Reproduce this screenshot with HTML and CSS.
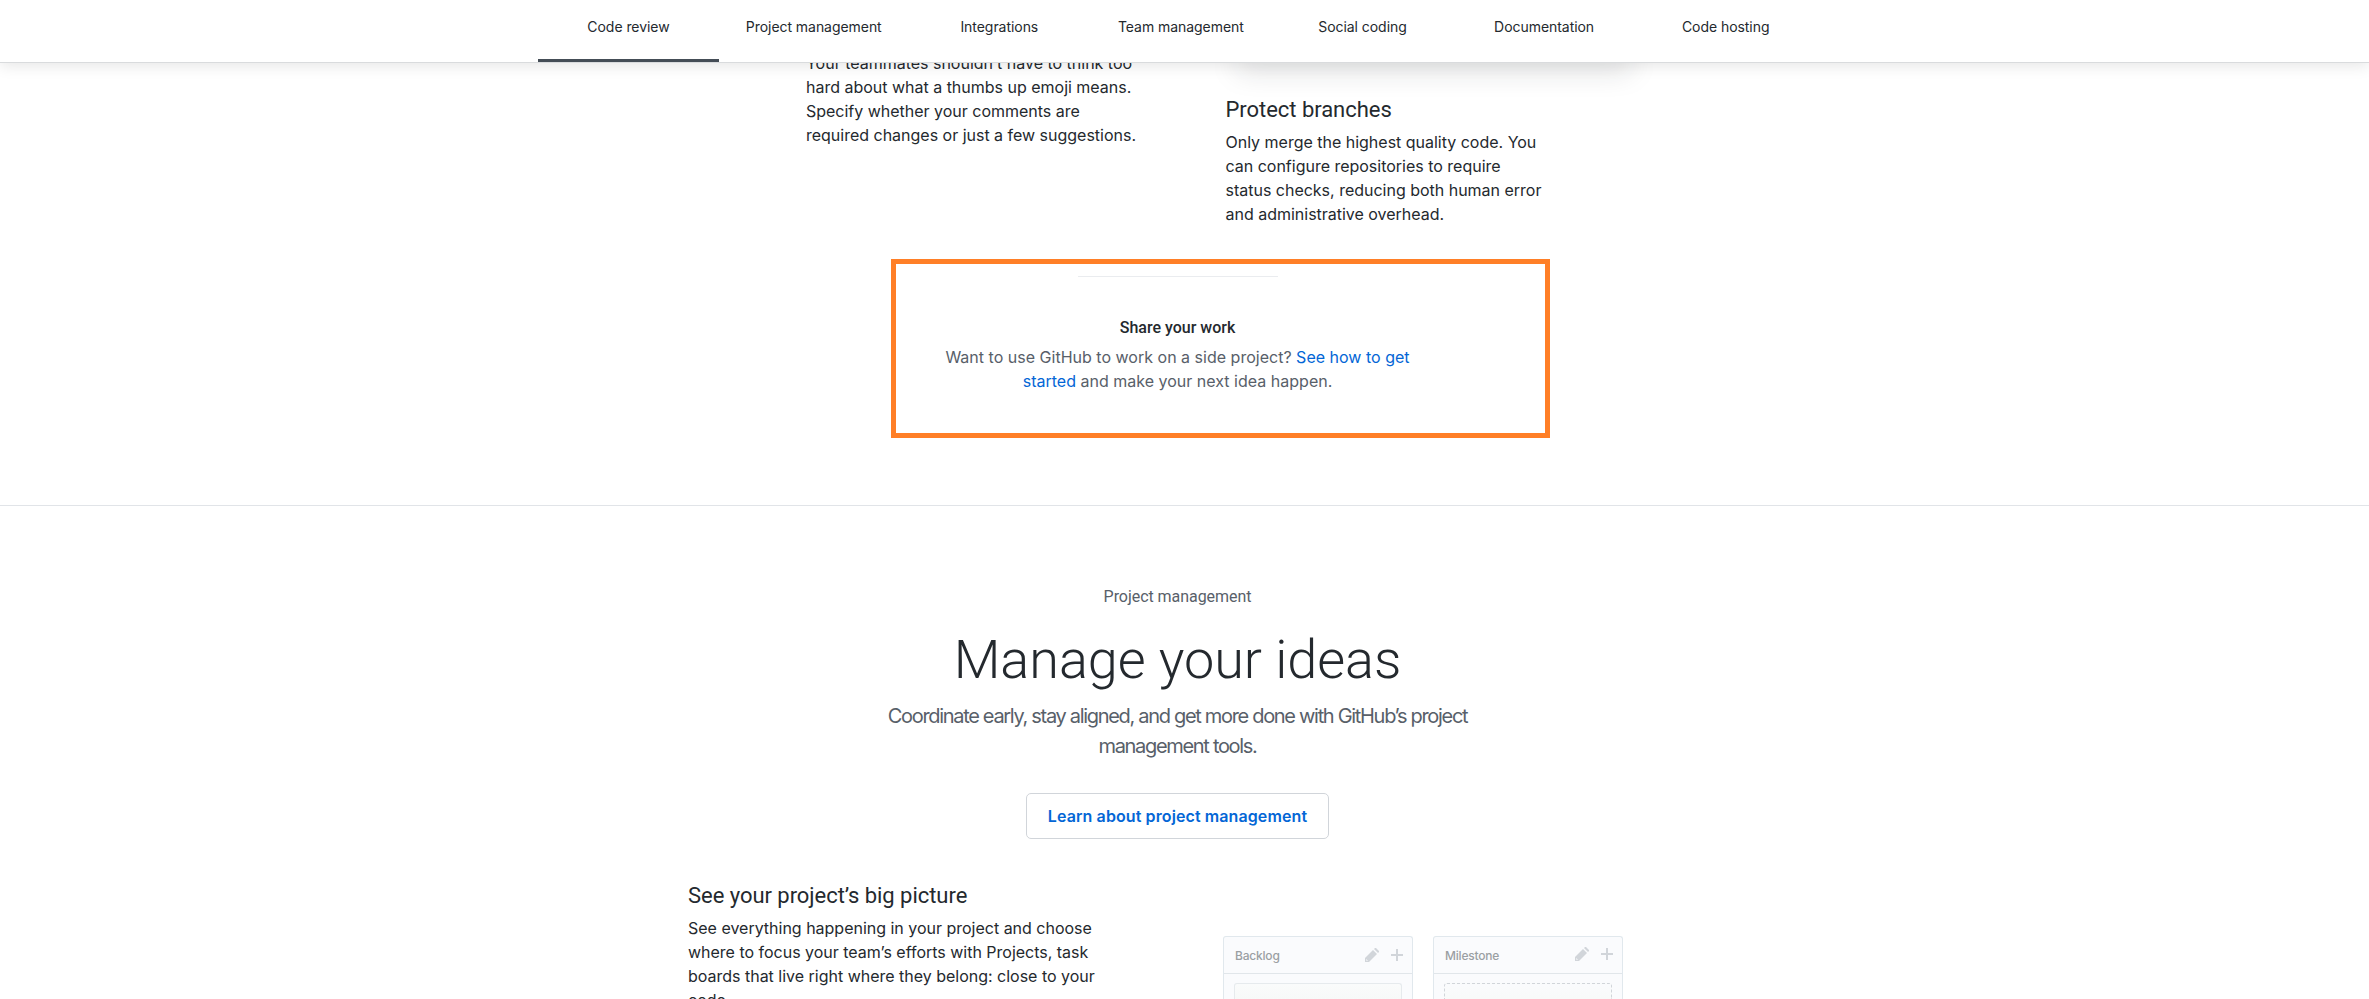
FILE: index.html
```html
<!DOCTYPE html>
<html lang="en">
<head>
<meta charset="utf-8">
<title>Features</title>
<link rel="stylesheet" href="styles.css">
</head>
<body>
<header class="subnav">
  <nav class="tabs">
    <a class="tab tab-active">Code review</a>
    <a class="tab tab-wide">Project management</a>
    <a class="tab">Integrations</a>
    <a class="tab">Team management</a>
    <a class="tab">Social coding</a>
    <a class="tab">Documentation</a>
    <a class="tab">Code hosting</a>
  </nav>
</header>

<main>
  <section class="review">
    <div class="review-columns">
      <p class="text">Your teammates shouldn’t have to think too<br>hard about what a thumbs up emoji means.<br>Specify whether your comments are<br>required changes or just a few suggestions.</p>
      <div>
        <div class="shot"></div>
        <h3 class="heading">Protect branches</h3>
        <p class="text">Only merge the highest quality code. You<br>can configure repositories to require<br>status checks, reducing both human error<br>and administrative overhead.</p>
      </div>
    </div>
    <div class="callout">
      <div class="callout-body">
        <hr class="rule">
        <h4 class="callout-title">Share your work</h4>
        <p class="text muted">Want to use GitHub to work on a side project? <a class="link">See how to get<br>started</a> and make your next idea happen.</p>
      </div>
    </div>
  </section>

  <section class="manage">
    <p class="eyebrow">Project management</p>
    <h2 class="title">Manage your ideas</h2>
    <p class="lead">Coordinate early, stay aligned, and get more done with GitHub’s project<br>management tools.</p>
    <a class="button">Learn about project management</a>
    <div class="picture-row">
      <div class="picture-copy">
        <h3 class="heading">See your project’s big picture</h3>
        <p class="text">See everything happening in your project and choose<br>where to focus your team’s efforts with Projects, task<br>boards that live right where they belong: close to your<br>code.</p>
      </div>
      <div class="board">
        <div class="column">
          <div class="column-head">
            <span class="column-name">Backlog</span>
            <svg class="pencil" viewBox="0 0 14 14"><path d="M0 14v-4l8-8 4 4-8 8zM9 1l1-1h1l3 3v1l-1 1zM1.3 11v1.700H3z" fill-rule="evenodd"/></svg>
            <svg class="plus" viewBox="0 0 12 12"><path d="M5 0h2v5h5v2H7v5H5V7H0V5h5z"/></svg>
          </div>
          <div class="card"></div>
        </div>
        <div class="column">
          <div class="column-head raised">
            <span class="column-name">Milestone</span>
            <svg class="pencil" viewBox="0 0 14 14"><path d="M0 14v-4l8-8 4 4-8 8zM9 1l1-1h1l3 3v1l-1 1zM1.3 11v1.700H3z" fill-rule="evenodd"/></svg>
            <svg class="plus" viewBox="0 0 12 12"><path d="M5 0h2v5h5v2H7v5H5V7H0V5h5z"/></svg>
          </div>
          <div class="card card-empty"></div>
        </div>
      </div>
    </div>
  </section>
</main>
</body>
</html>
```

FILE: styles.css
```css
* { box-sizing: border-box; margin: 0; }

body {
  height: 999px;
  overflow: hidden;
  background: #fff;
  color: #24292e;
  font: 16px/24px Inter, sans-serif;
}

.subnav {
  position: relative;
  z-index: 2;
  height: 63px;
  padding-left: 538px;
  background: #fff;
  border-bottom: 1px solid #d9dbdd;
  box-shadow: 0 3px 14px rgba(0, 0, 0, .1);
}

.tabs { display: flex; height: 62px; }

.tab {
  flex: none;
  width: 181.6px;
  padding-top: 16px;
  font-size: 14px;
  line-height: 22px;
  letter-spacing: -.05px;
  text-align: center;
}

.tab-active { width: 181px; border-bottom: 3px solid #444d56; }
.tab-wide { width: 189.5px; }

.review {
  height: 455px;
  border-bottom: 1px solid #e1e4e8;
}

.review-columns {
  display: grid;
  grid-template-columns: 419.5px 420px;
  height: 196px;
  margin-top: -12px;
  padding-left: 806px;
}

.text { letter-spacing: -.01px; white-space: nowrap; }

.shot {
  width: 394px;
  height: 11px;
  margin: 0 0 34px 11px;
  box-shadow: 0 7px 28px rgba(27, 31, 35, .22);
}

.heading {
  margin-bottom: 6px;
  font: 400 22px/28px Roboto, sans-serif;
  letter-spacing: -.04px;
}

.callout {
  width: 659px;
  height: 179px;
  margin: 12px 0 0 891px;
  border: 5px solid #ff7f27;
}

.callout-body {
  display: flex;
  flex-direction: column;
  align-items: center;
  width: 563px;
  padding-top: 12px;
  text-align: center;
}

.rule {
  width: 200px;
  height: 1px;
  border: 0;
  background: #eaecef;
}

.callout-title {
  margin: 39px 0 5px;
  font: 500 16px/24px Roboto, sans-serif;
}

.muted { color: #586069; letter-spacing: .01px; }
.link { color: #0366d6; }

.manage {
  display: flex;
  flex-direction: column;
  align-items: center;
  width: 2355px;
  height: 493px;
  overflow: hidden;
  padding-top: 79px;
}

.manage > * { flex: none; }

.eyebrow {
  color: #586069;
  font: 16px/24px Roboto, sans-serif;
  letter-spacing: -.05px;
}

.title {
  margin-top: 17px;
  font: 300 54px/68px Roboto, sans-serif;
  letter-spacing: -.04px;
}

.lead {
  margin-top: 7px;
  color: #586069;
  font-size: 20px;
  line-height: 30px;
  letter-spacing: -1.31px;
  text-align: center;
}

.button {
  width: 303px;
  height: 46px;
  margin-top: 32px;
  border: 1px solid #d1d5da;
  border-radius: 5px;
  color: #0366d6;
  font-weight: 600;
  line-height: 44px;
  letter-spacing: .1px;
  text-align: center;
}

.picture-row {
  display: grid;
  grid-template-columns: 535px 400px;
  align-self: flex-start;
  height: 117px;
  overflow: hidden;
  margin: 43px 0 0 688px;
}

.board {
  display: flex;
  gap: 20px;
  padding-top: 54px;
}

.column {
  width: 190px;
  height: 63px;
  border: 1px solid #e1e8ed;
  border-bottom: 0;
  border-radius: 3px 3px 0 0;
  background: #fafbfd;
}

.column-head {
  display: flex;
  align-items: center;
  height: 37px;
  padding: 0 9px 0 11px;
  border-bottom: 1px solid #e1e6ea;
}

.column-name {
  flex: 1;
  padding-top: 2px;
  color: #9a9fa3;
  font-size: 12px;
  font-weight: 500;
  letter-spacing: -.2px;
}

.pencil { width: 14px; height: 14px; margin-right: 12px; fill: #d1d5da; }
.plus { width: 12px; height: 12px; fill: #d1d5da; }
.raised svg { margin-bottom: 2px; }

.card {
  height: 16px;
  margin: 9px 10px 0;
  border: 1px solid #e6eaed;
  border-bottom: 0;
  border-radius: 3px 3px 0 0;
  background: linear-gradient(#fafbfb, #f7f9f8);
}

.card-empty {
  border: 1px dashed #d1d5da;
  border-bottom: 0;
  background: linear-gradient(#fafbfd, #f8faf9);
}
```
